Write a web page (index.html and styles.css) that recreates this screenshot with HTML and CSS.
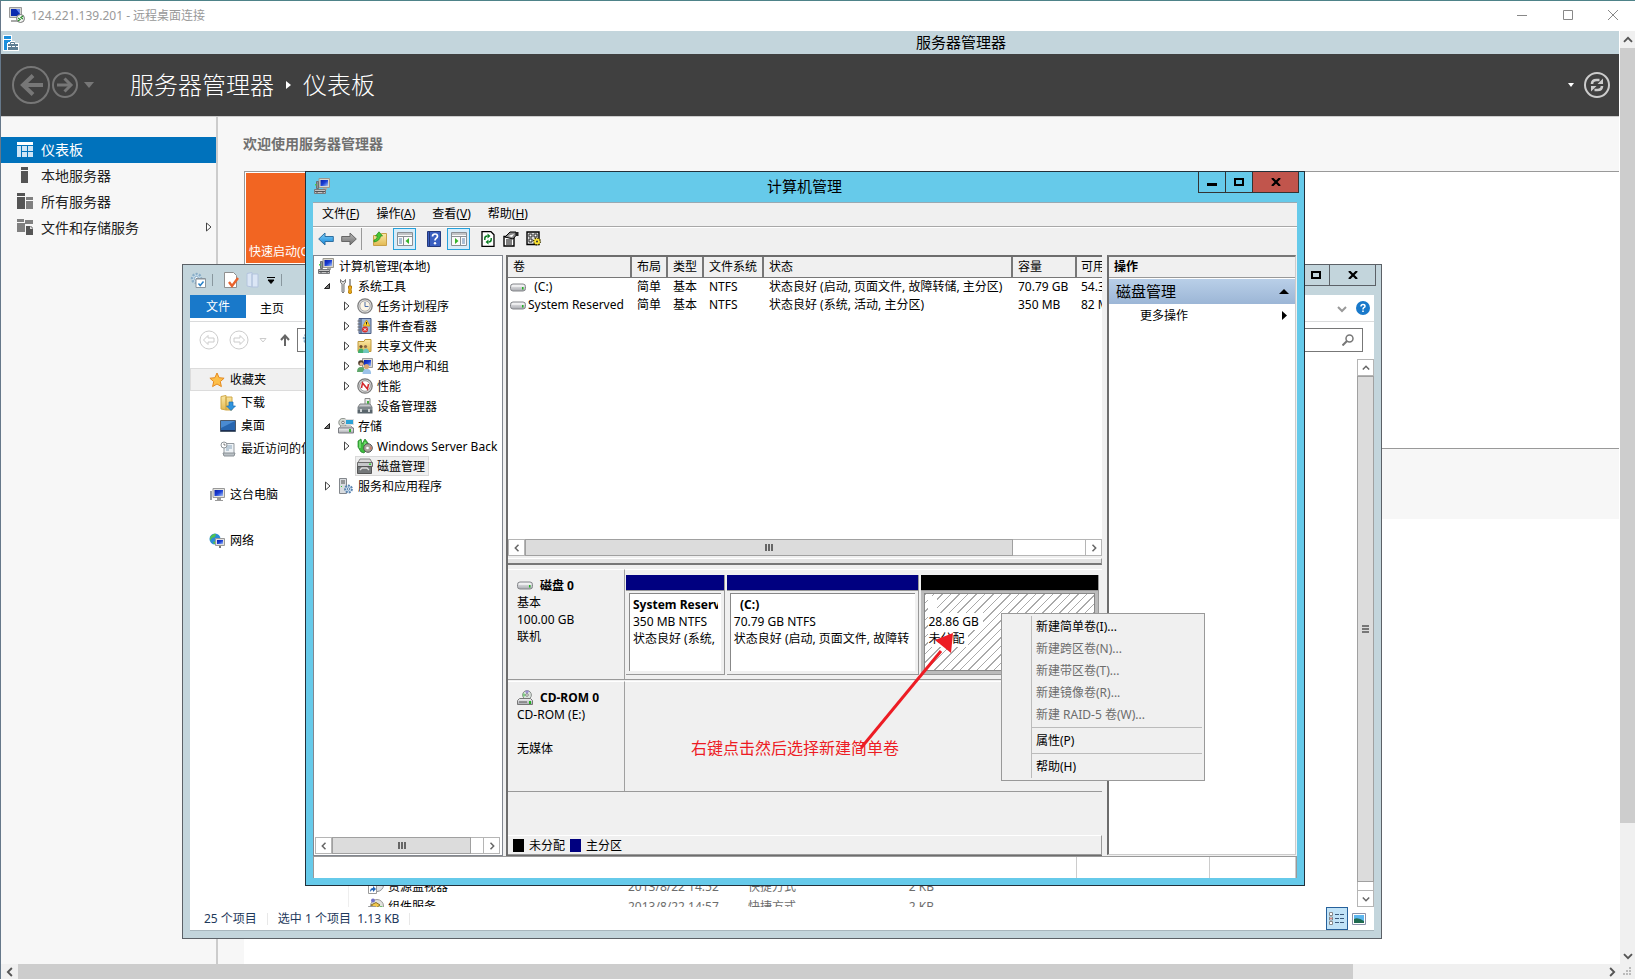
FILE: index.html
```
<!DOCTYPE html>
<html lang="zh-CN">
<head>
<meta charset="utf-8">
<title>124.221.139.201 - 远程桌面连接</title>
<link rel="stylesheet" href="styles.css">
</head>
<body>
<svg class="defs" aria-hidden="true">
  <defs>
    <linearGradient id="g-screen" x1="0" y1="0" x2="1" y2="1"><stop offset="0" stop-color="#0a1ea8"/><stop offset="0.5" stop-color="#1b3fd6"/><stop offset="1" stop-color="#a9c4f5"/></linearGradient>
    <linearGradient id="g-drive" x1="0" y1="0" x2="0" y2="1"><stop offset="0" stop-color="#f2f2f4"/><stop offset="1" stop-color="#a9abb0"/></linearGradient>
    <linearGradient id="g-blue" x1="0" y1="0" x2="0" y2="1"><stop offset="0" stop-color="#7fd0fa"/><stop offset="1" stop-color="#1485d6"/></linearGradient>
    <linearGradient id="g-gray" x1="0" y1="0" x2="0" y2="1"><stop offset="0" stop-color="#b8b8b8"/><stop offset="1" stop-color="#6f6f6f"/></linearGradient>
    <linearGradient id="g-folder" x1="0" y1="0" x2="0" y2="1"><stop offset="0" stop-color="#fbe9a8"/><stop offset="1" stop-color="#e2b951"/></linearGradient>
  </defs>
  <symbol id="i-pc" viewBox="0 0 16 16"><path d="M5 .5h10.500v9H5z" fill="#d9d6cd" stroke="#9a988f"/><path d="M6.500 2h7.500v6H6.500z" fill="url(#g-screen)"/><path d="M2.500 3.500h2v7h-2z" fill="#8f9296" stroke="#6c6f73"/><path d="M1 6h1.500v1.500H1z" fill="#4ad24a"/><path d="M9 10h4v2H9z" fill="#aaa"/><path d="M.5 11.500h11v4H.5z" fill="#c4c4c4" stroke="#77797c"/><path d="M1 13.500h10M3 13v2M9 13v2" stroke="#505356"/></symbol>
  <symbol id="i-rdp" viewBox="0 0 16 16"><path d="M0.500 0.500h12v10h-12z" fill="#d4d4d0" stroke="#999"/><path d="M2 2h9v7H2z" fill="#0c2bb0"/><path d="M7 2h4v5z" fill="#6b8cf0"/><path d="M2 13h7v2H2z" fill="#a8a8a8"/><circle cx="11.500" cy="11.500" r="4" fill="#f4f4f4" stroke="#777"/><path d="M9 11l2 1.500-2 1.500M14 9l-2 1.500 2 1.500" fill="none" stroke="#2a8f2a" stroke-width="1.300"/></symbol>
  <symbol id="i-svrmgr" viewBox="0 0 16 16"><path d="M0 0h9v16H0z" fill="#fff"/><path d="M1 1h7v3H1zM1 5h7v2H5v8H1z" fill="#1c8fdc"/><path d="M4 8h3V6h5v2h4v8H4z" fill="#fff"/><path d="M5 9h10v2H5zM5 12h10v3H5z" fill="#5d7e93"/><path d="M7.500 9V7.500h4V9" fill="none" stroke="#5d7e93"/><path d="M8 11h1v2H8zM12 11h1v2h-1z" fill="#5d7e93"/></symbol>
  <symbol id="i-tools" viewBox="0 0 16 16"><path d="M2.500 1.500v3l1.500 1.500v8q1 2 2 0V6l1.500-1.500v-3L6 3.500H4z" fill="#d4d4d4" stroke="#777"/><path d="M12 1v7" stroke="#888" stroke-width="1.600"/><path d="M10.500 8h3v2l-.5 1 .5 4q-1.500 1-3 0l.5-4-.5-1z" fill="#f4b219" stroke="#b57b08"/></symbol>
  <symbol id="i-clock" viewBox="0 0 16 16"><circle cx="8" cy="8" r="7.200" fill="#d9d9d9" stroke="#7c7c7c" stroke-width="1.200"/><circle cx="8" cy="8" r="5.200" fill="#fcf6e6" stroke="#aaa"/><path d="M8 4v4.500h3.500" fill="none" stroke="#4c6ea8"/></symbol>
  <symbol id="i-event" viewBox="0 0 16 16"><path d="M2 .5h12v15H2z" fill="#9db4d4" stroke="#4c5f86"/><path d="M4 .5v15" stroke="#36486e"/><path d="M0.500 3h3M0.500 6h3M0.500 9h3M0.500 12h3" stroke="#666"/><path d="M9.500 2l3.500 6H6z" fill="#ffd633" stroke="#c98e00" stroke-width=".7"/><path d="M9.500 4v2.500" stroke="#222"/><circle cx="8" cy="11.500" r="3" fill="#d9302c"/><path d="M6.800 10.300l2.400 2.400M9.200 10.300l-2.400 2.400" stroke="#fff"/></symbol>
  <symbol id="i-share" viewBox="0 0 16 16"><path d="M1 3.500h6l1-2h6v12H1z" fill="url(#g-folder)" stroke="#c09a3c"/><circle cx="4" cy="8.500" r="1.600" fill="#6b4a2e"/><path d="M1 15q0-4.500 3-4.500t3 4.500z" fill="#3fae6f"/><circle cx="8.500" cy="8.500" r="1.600" fill="#8c6a48"/><path d="M6 15q0-4.500 3-4.500t3 4.500z" fill="#6fc8bf"/></symbol>
  <symbol id="i-users" viewBox="0 0 16 16"><path d="M5.500.5h10v9h-10z" fill="#dcd9d0" stroke="#999"/><path d="M7 2h7v6H7z" fill="url(#g-screen)"/><circle cx="4" cy="5" r="2.800" fill="#4c382a"/><circle cx="4.300" cy="6" r="1.800" fill="#e8b98e"/><path d="M0 14q0-5 4-5t4 5z" fill="#5ea66a"/><circle cx="9.500" cy="8.500" r="2.600" fill="#d9a877"/><path d="M5.500 16q0-5 4.500-5t4 5z" fill="#9cc2e8"/></symbol>
  <symbol id="i-perf" viewBox="0 0 16 16"><circle cx="8" cy="8" r="7.200" fill="#d6d6d6" stroke="#777" stroke-width="1.200"/><circle cx="8" cy="8" r="5.300" fill="#fff" stroke="#999"/><path d="M4.500 10l1-5 5 6 1-5" fill="none" stroke="#d3262a" stroke-width="1.500"/></symbol>
  <symbol id="i-device" viewBox="0 0 16 16"><path d="M8 .5h5v8H8z" fill="#ececec" stroke="#888"/><path d="M10 3h2v3h-2z" fill="#45b040"/><path d="M1 9l2-3h10l2 3z" fill="#c5c8cb" stroke="#808386"/><path d="M.5 9h15v3H.5z" fill="#7f878c"/><path d="M.5 12h15v3.500H.5z" fill="#59656c"/><path d="M3 11h2v3H3zM11 11h2v3h-2z" fill="#cfd4d6"/></symbol>
  <symbol id="i-storage" viewBox="0 0 16 16"><circle cx="5" cy="4.500" r="4.200" fill="#d5dad3" stroke="#8a8f8a"/><circle cx="5" cy="4.500" r="1.300" fill="#fff" stroke="#777"/><path d="M7.500 1.500h8v5h-8z" fill="#2ba2d6" stroke="#ddd"/><path d="M1 10l2-2h10l2 2z" fill="#f0f0f0" stroke="#999"/><path d="M.5 10h15v5H.5z" fill="url(#g-drive)" stroke="#7d7f84"/><path d="M11 11h2v3h-2z" fill="#32b432"/></symbol>
  <symbol id="i-backup" viewBox="0 0 16 16"><path d="M1 3l3-2 1 5 3-5 3 4v5l-4 5-3-1-3-5z" fill="#3dbb3d" stroke="#1d7d24" stroke-width=".7"/><path d="M3 3v7M8 4v6" stroke="#a6f5a0"/><circle cx="11" cy="10" r="4.300" fill="#a8a49c" stroke="#555"/><circle cx="10.500" cy="10" r="1.300" fill="#fff"/><path d="M13 8l2 2-2 2z" fill="#d27a64"/></symbol>
  <symbol id="i-disk" viewBox="0 0 16 16"><path d="M1 4.500l2-3.500h10l2 3.500z" fill="#dadada" stroke="#888"/><path d="M.5 4.500h15v4H.5z" fill="#c5c7c9" stroke="#6b6b6b"/><path d="M12 5.500h2V7h-2z" fill="#35d035"/><path d="M.5 8.500h14v7H.5z" fill="#74787a" stroke="#555"/><path d="M3 12l2-2h5l2 2" fill="none" stroke="#ddd" stroke-width="1.300"/></symbol>
  <symbol id="i-services" viewBox="0 0 16 16"><path d="M1.500.5h7v15h-7z" fill="#d9dcdf" stroke="#83878c"/><path d="M3 3h4M3 5h4" stroke="#555"/><path d="M3 8h1v1H3z" fill="#3c3"/><circle cx="10.500" cy="11" r="3.400" fill="#d6e6f5" stroke="#5c85b0" stroke-width="2" stroke-dasharray="2 1"/><circle cx="10.500" cy="11" r="1.200" fill="#fff" stroke="#5c85b0"/></symbol>
  <symbol id="i-drive" viewBox="0 0 16 8"><path d="M.5 3q0-2.500 2.500-2.500h10q2.500 0 2.500 2.500v2q0 2.500-2.500 2.500H3q-2.500 0-2.500-2.500z" fill="url(#g-drive)" stroke="#85878b"/><path d="M2 2.500h12" stroke="#fff"/><path d="M12 3.500h1.500V6H12z" fill="#24b324"/></symbol>
  <symbol id="i-cdrom" viewBox="0 0 16 16"><circle cx="10" cy="5" r="4.400" fill="#d9e3dc" stroke="#8b8f8c"/><path d="M10 5L8 1q3-1 4 0z" fill="#9c8fd0"/><path d="M10 5l-4 2q-.5-3 0-4z" fill="#7fce83"/><circle cx="10" cy="5" r="1.300" fill="#fff" stroke="#888"/><path d="M.5 10.500l2-2h11l2 2v4h-15z" fill="url(#g-drive)" stroke="#777"/><path d="M2 12h8" stroke="#555"/><path d="M12 11h2v3h-2z" fill="#24b324"/></symbol>
  <symbol id="i-left" viewBox="0 0 16 16"><path d="M.7 8L7 2v3.500h8.300v5H7V14z" fill="url(#g-blue)" stroke="#2f6fa0"/></symbol>
  <symbol id="i-right" viewBox="0 0 16 16"><path d="M15.300 8L9 2v3.500H.7v5H9V14z" fill="url(#g-gray)" stroke="#666"/></symbol>
  <symbol id="i-upfolder" viewBox="0 0 16 16"><path d="M1.500 4.500h7l1-2h5v12h-13z" fill="url(#g-folder)" stroke="#c8a048"/><path d="M2 9q3 0 3.500-4H3.500L7 .8 10.500 5H8.500q-.5 5-6.500 6z" fill="#47c733" stroke="#218a1b" stroke-width=".7"/></symbol>
  <symbol id="i-panel-l" viewBox="0 0 16 14"><path d="M.5.5h15v13H.5z" fill="#fafafa" stroke="#8a8f94"/><path d="M1 2h14M1 4.500h14" stroke="#8a8f94"/><path d="M6.500 5v8" stroke="#8a8f94"/><path d="M2 7h3M2 9h3M2 11h3" stroke="#5d83ad"/><path d="M12 6v6L8.500 9z" fill="#35b32b"/></symbol>
  <symbol id="i-panel-r" viewBox="0 0 16 14"><path d="M.5.5h15v13H.5z" fill="#fafafa" stroke="#8a8f94"/><path d="M1 2h14M1 4.500h14" stroke="#8a8f94"/><path d="M9.500 5v8" stroke="#8a8f94"/><path d="M11 7h3M11 9h3M11 11h3" stroke="#5d83ad"/><path d="M4 6v6L7.500 9z" fill="#35b32b"/></symbol>
  <symbol id="i-help" viewBox="0 0 14 16"><path d="M.5.5h13v15H.5z" fill="#3a5fc0" stroke="#24397c"/><path d="M2.500 1v14" stroke="#22367a"/><path d="M5.500 5.500q0-2.500 2.500-2.500t2.500 2.300q0 1.200-1.500 2.200-1 .7-1 2" fill="none" stroke="#fff" stroke-width="1.700"/><circle cx="8" cy="12.300" r="1.200" fill="#fff"/></symbol>
  <symbol id="i-refreshdoc" viewBox="0 0 14 16"><path d="M1 .7h9l3 3v11.600H1z" fill="#fff" stroke="#000" stroke-width="1.300"/><path d="M3.800 9V7.500Q3.800 5 6.500 5M10.200 7v1.500q0 2.500-2.700 2.500" fill="none" stroke="#0a7f22" stroke-width="1.500"/><path d="M6.500 2.500L9.500 5l-3 2.500zM7.500 8.500l-3 2.500 3 2.500z" fill="#0a7f22"/></symbol>
  <symbol id="i-props" viewBox="0 0 16 16"><path d="M1 5.500h10v9.500H1z" fill="#fff" stroke="#000" stroke-width="1.400"/><path d="M3 9h6M3 11h6M3 13h6" stroke="#000"/><path d="M2 6l5-5h6v3.500L10 8z" fill="#888" stroke="#000"/><path d="M5 5l4 1 2-3z" fill="#fff"/><path d="M13 1h2.500v4H13z" fill="#222"/></symbol>
  <symbol id="i-settings" viewBox="0 0 16 16"><path d="M1 1h12v12.500H1z" fill="#ddd" stroke="#000" stroke-width="1.400"/><path d="M3 3h3v3H3zM8 3h3v3H8zM3 8h3v3H3z" fill="#fff" stroke="#222"/><circle cx="11" cy="10.500" r="3.200" fill="#ffe633" stroke="#3d3600" stroke-width="1.800" stroke-dasharray="1.200 1.300"/><circle cx="11" cy="10.500" r="2.600" fill="#ffe633"/><circle cx="11" cy="10.500" r="1" fill="#333"/></symbol>
  <symbol id="i-star" viewBox="0 0 16 16"><path d="M8 1l2.100 4.700 5 .5-3.800 3.400 1.100 5L8 12l-4.400 2.600 1.100-5L.9 6.200l5-.5z" fill="#fcbf4a" stroke="#e58a1f"/></symbol>
  <symbol id="i-download" viewBox="0 0 16 16"><path d="M1 1.500l5-1V15l-5-1zM6 2h6v13H6z" fill="url(#g-folder)" stroke="#d0a847"/><path d="M9 7h4v4h2.500L11 15.500 6.500 11H9z" fill="#2f93dd" stroke="#1b6fb3" stroke-width=".7"/></symbol>
  <symbol id="i-desktop" viewBox="0 0 16 16"><path d="M.5 2.500h15v11H.5z" fill="#2766b0" stroke="#4b5a6c"/><path d="M1 3h14L1 10z" fill="#4a8bd2"/><path d="M1 12h14v1H1z" fill="#1a2f55"/></symbol>
  <symbol id="i-recent" viewBox="0 0 16 16"><path d="M4 2.500h10v10H4z" fill="#eef2f5" stroke="#949ba1"/><path d="M6 5h6M6 7h6M6 9h3" stroke="#8aa5bb"/><circle cx="4" cy="4" r="3" fill="#fff" stroke="#8e9499"/><path d="M4 2.500V4h1.500" fill="none" stroke="#555" stroke-width=".8"/><path d="M3 12h12l-1 3H4z" fill="#b9c0c5" stroke="#8a9196"/></symbol>
  <symbol id="i-thispc" viewBox="0 0 16 16"><path d="M4 1.500h11.500v9H4z" fill="#e4e4e0" stroke="#999"/><path d="M5.500 3h8.500v6H5.500z" fill="url(#g-screen)"/><path d="M1 4h2v9H1z" fill="#989da2"/><path d="M8 11h4v2H8zM6 13h8v1H6z" fill="#9a9a9a"/></symbol>
  <symbol id="i-network" viewBox="0 0 16 16"><circle cx="6" cy="6" r="5.500" fill="#2b8bd8"/><path d="M2 3q3-3 5-2l-1 3-3 1-2 3q-1-3 1-5zM4 9l3-1 1 3H5z" fill="#51c24f"/><path d="M6.500 5.500h9v7h-9z" fill="#e0e0e0" stroke="#999"/><path d="M8 7h6v4H8z" fill="url(#g-screen)"/><path d="M10 13h2v2h-2z" fill="#777"/></symbol>
  <symbol id="i-gearbox" viewBox="0 0 16 16"><circle cx="6.500" cy="6.500" r="4.500" fill="#c7dcea" stroke="#8aaec8" stroke-width="2.400" stroke-dasharray="2 1.300"/><circle cx="6.500" cy="6.500" r="2" fill="#fff" stroke="#8aaec8"/><path d="M6 6.500h9.500v9H6z" fill="#fff" stroke="#8a949c"/><path d="M6 7h9" stroke="#8a949c"/><path d="M8.500 11.500l1.700 2 3.300-4" fill="none" stroke="#2a82c9" stroke-width="1.500"/></symbol>
  <symbol id="i-doccheck" viewBox="0 0 16 16"><path d="M1.500.5h9l3 3v12h-12z" fill="#fff" stroke="#8f8f8f"/><path d="M6 10l3 4 6-8" fill="none" stroke="#e9622c" stroke-width="2.400"/></symbol>
  <symbol id="i-newfolder" viewBox="0 0 16 16"><path d="M2 1.500l5-1V15l-5-1zM7 2h6v13H7z" fill="#dbe6f5" stroke="#b3c4dd"/></symbol>
  <symbol id="i-shortcut" viewBox="0 0 16 16"><circle cx="9" cy="7" r="6.500" fill="#dfe3e6" stroke="#8b8f93"/><path d="M9 7V2M9 7l4-2" stroke="#c44"/><path d="M.5 7.500h8v8h-8z" fill="#fff" stroke="#999"/><path d="M2 14q0-4 3-4V8l3 3-3 3v-2q-2 0-3 2z" fill="#2063b8"/></symbol>
  <symbol id="i-comps" viewBox="0 0 16 16"><circle cx="9" cy="8" r="6.500" fill="#e2e2de" stroke="#9a9a98"/><circle cx="5" cy="2.500" r="2" fill="#6f6fc8"/><path d="M3 7l5-2.500L12 7l-4 3z" fill="#f1c84c" stroke="#8c702a"/><circle cx="13" cy="10" r="2" fill="#5ab85a"/><path d="M.5 8.500h7v7h-7z" fill="#3870b8" stroke="#999"/></symbol>
  <symbol id="i-dash" viewBox="0 0 16 16"><path d="M0 1h16v3H0z" fill="#fff"/><path d="M0 5h4v11H0zM5 5h5v5H5zM11 5h5v5h-5zM5 11h5v5H5zM11 11h5v5h-5z" fill="#cfe5f6"/></symbol>
  <symbol id="i-server" viewBox="0 0 16 16"><path d="M4 0h7v3H4zM4 4h7v12H4z" fill="#555"/></symbol>
  <symbol id="i-servers" viewBox="0 0 16 16"><path d="M0 0h8v3H0zM0 4h8v12H0z" fill="#555"/><path d="M9 4h7v3H9zM9 8h7v8H9z" fill="#808080"/></symbol>
  <symbol id="i-filesrv" viewBox="0 0 16 16"><path d="M0 0h7v3H0zM0 4h8v9H0zM8 1h8v4H8z" fill="#808080"/><path d="M9 7h5l2 2v7H9z" fill="#555"/><path d="M13 7v3h3z" fill="#ddd"/></symbol>
  <symbol id="c-left" viewBox="0 0 8 8"><path d="M5.500.8L2.300 4l3.200 3.200" fill="none" stroke="currentColor" stroke-width="1.500"/></symbol>
  <symbol id="c-right" viewBox="0 0 8 8"><path d="M2.500.8L5.700 4 2.500 7.200" fill="none" stroke="currentColor" stroke-width="1.500"/></symbol>
  <symbol id="c-up" viewBox="0 0 8 8"><path d="M.8 5.500L4 2.300l3.200 3.200" fill="none" stroke="currentColor" stroke-width="1.500"/></symbol>
  <symbol id="c-down" viewBox="0 0 8 8"><path d="M.8 2.500L4 5.700l3.200-3.200" fill="none" stroke="currentColor" stroke-width="1.500"/></symbol>
  <symbol id="t-closed" viewBox="0 0 8 10"><path d="M2.500 1L7 5 2.500 9z" fill="#fff" stroke="#444"/></symbol>
  <symbol id="t-open" viewBox="0 0 8 10"><path d="M6.500 2.500v5H1.500z" fill="#777" stroke="#222"/></symbol>
</svg>

<header class="rdp-bar">
  <svg class="ico"><use href="#i-rdp"/></svg>
  <h1 class="rdp-title">124.221.139.201 - 远程桌面连接</h1>
  <button class="rdp-btn" aria-label="最小化"><svg width="10" height="10"><path d="M0 5.500h10" stroke="#888"/></svg></button>
  <button class="rdp-btn" aria-label="最大化"><svg width="10" height="10"><path d="M.5.5h9v9h-9z" fill="none" stroke="#888"/></svg></button>
  <button class="rdp-btn" aria-label="关闭"><svg width="10" height="10"><path d="M0 0l10 10M10 0L0 10" stroke="#888"/></svg></button>
</header>

<div class="viewport">
  <div class="remote">
    <div class="sm-title">
      <svg class="ico sm-logo"><use href="#i-svrmgr"/></svg>
      <div class="sm-caption">服务器管理器</div>
    </div>
    <div class="sm-nav">
      <button class="plain" aria-label="后退"><svg width="38" height="38" fill="none" stroke="#777"><circle cx="19" cy="19" r="18" stroke-width="2"/><path d="M31 19H11" stroke-width="4"/><path d="M21 9.500L11 19l10 9.500" stroke-width="4"/></svg></button>
      <button class="plain" aria-label="前进"><svg width="28" height="28" fill="none" stroke="#777"><circle cx="14" cy="14" r="12" stroke-width="2"/><path d="M6 14h14" stroke-width="3"/><path d="M13.500 7.500L20 14l-6.500 6.500" stroke-width="3"/></svg></button>
      <svg class="sm-drop" width="10" height="6"><path d="M0 0h10L5 6z" fill="#777"/></svg>
      <div class="crumbs"><span>服务器管理器</span><svg width="5" height="8"><path d="M0 0l5 4-5 4z" fill="#fff"/></svg><span>仪表板</span></div>
      <svg width="6" height="4"><path d="M0 0h6L3 4z" fill="#fff"/></svg>
      <button class="plain sm-refresh" aria-label="刷新"><svg width="26" height="26" fill="none" stroke="#ccc"><circle cx="13" cy="13" r="12" stroke-width="2"/><path d="M8 12q0-4 4.500-4h3M18 14q0 4-4.500 4h-3" stroke-width="2.600"/><path d="M13.500 12H19V6.500zM12.500 14H7v5.500z" fill="#ccc" stroke="none"/></svg></button>
    </div>
    <div class="sm-body">
      <nav class="sm-side">
        <a href="#" class="side-item active"><svg class="ico"><use href="#i-dash"/></svg>仪表板</a>
        <a href="#" class="side-item"><svg class="ico"><use href="#i-server"/></svg>本地服务器</a>
        <a href="#" class="side-item"><svg class="ico"><use href="#i-servers"/></svg>所有服务器</a>
        <a href="#" class="side-item"><svg class="ico"><use href="#i-filesrv"/></svg>文件和存储服务<svg class="side-more" width="8" height="10"><use href="#t-closed"/></svg></a>
      </nav>
      <main class="sm-main">
        <h2 class="sm-welcome">欢迎使用服务器管理器</h2>
        <div class="welcome-box"><div class="tile">快速启动(Q)</div></div>
        <div class="sm-gap"></div>
        <div class="sm-blank"></div>
      </main>
    </div>
  </div>
  <div class="vscroll" aria-hidden="true"><span class="sb"><svg width="10" height="10"><use href="#c-up"/></svg></span><span class="vthumb"></span><span class="vrest"></span><span class="sb"><svg width="10" height="10"><use href="#c-down"/></svg></span></div>
</div>
<div class="hscroll" aria-hidden="true"><span class="sb"><svg width="10" height="10"><use href="#c-left"/></svg></span><span class="hthumb"></span><span class="hrest"></span><span class="sb"><svg width="10" height="10"><use href="#c-right"/></svg></span><span class="grip"><svg width="9" height="9" fill="#bbb"><path d="M6 0h2v2H6zM3 3h2v2H3zM6 3h2v2H6zM0 6h2v2H0zM3 6h2v2H3zM6 6h2v2H6z"/></svg></span></div>

<section class="explorer" aria-label="文件资源管理器">
  <div class="ex-title">
    <svg class="ico"><use href="#i-gearbox"/></svg><i class="bar"></i>
    <svg class="ico"><use href="#i-doccheck"/></svg><svg class="ico"><use href="#i-newfolder"/></svg>
    <svg width="8" height="7"><path d="M0 .5h8M1 3h6L4 6.500z" stroke="#000"/></svg><i class="bar"></i>
    <div class="winbtns ex-btns">
      <button class="wb" aria-label="最小化"></button>
      <button class="wb" aria-label="最大化"><svg width="10" height="8"><path d="M1 1h8v6H1z" fill="none" stroke="#000" stroke-width="2"/></svg></button>
      <button class="wb close" aria-label="关闭"><svg width="10" height="8"><path d="M1 0l8 8M9 0L1 8" stroke="#000" stroke-width="2.200"/></svg></button>
    </div>
  </div>
  <div class="ex-inner">
    <div class="ex-tabs"><button class="tab file">文件</button><button class="tab">主页</button>
      <svg class="push" width="10" height="7"><path d="M1 1l4 4 4-4" fill="none" stroke="#999" stroke-width="2"/></svg>
      <svg class="ex-help" width="14" height="14"><circle cx="7" cy="7" r="7" fill="#1979ca"/><path d="M5 5.500q0-2 2-2t2 1.700q0 .8-1.200 1.500Q7 7.200 7 8.500" fill="none" stroke="#fff" stroke-width="1.500"/><path d="M6.200 9.500h1.600V11H6.200z" fill="#fff"/></svg>
    </div>
    <div class="ex-nav">
      <svg width="20" height="20" fill="none" stroke="#ccc"><circle cx="10" cy="10" r="9"/><path d="M9 5.500L4.500 10 9 14.500V12h6V8H9z"/></svg>
      <svg width="20" height="20" fill="none" stroke="#ccc"><circle cx="10" cy="10" r="9"/><path d="M11 5.500l4.500 4.500-4.500 4.500V12H5V8h6z"/></svg>
      <svg width="8" height="5"><path d="M1 .5h6L4 4z" fill="none" stroke="#ccc"/></svg>
      <svg class="ex-up" width="10" height="12"><path d="M5 12V2M1 6l4-4.500L9 6" fill="none" stroke="#666" stroke-width="2"/></svg>
      <div class="ex-addr"><svg class="ico"><use href="#i-gearbox"/></svg></div>
      <div class="ex-search"><input type="search" aria-label="搜索"><svg width="12" height="12"><circle cx="7.500" cy="4.500" r="3.500" fill="none" stroke="#777" stroke-width="1.500"/><path d="M5 7l-4.500 4.500" stroke="#777" stroke-width="2"/></svg></div>
    </div>
    <div class="ex-body">
      <nav class="ex-tree">
        <a href="#" class="fav"><svg class="ico"><use href="#i-star"/></svg>收藏夹</a>
        <a href="#" class="sub"><svg class="ico"><use href="#i-download"/></svg>下载</a>
        <a href="#" class="sub"><svg class="ico"><use href="#i-desktop"/></svg>桌面</a>
        <a href="#" class="sub"><svg class="ico"><use href="#i-recent"/></svg>最近访问的位置</a>
        <a href="#" class="top"><svg class="ico"><use href="#i-thispc"/></svg>这台电脑</a>
        <a href="#" class="top"><svg class="ico"><use href="#i-network"/></svg>网络</a>
      </nav>
      <div class="ex-list">
        <div class="ex-row"><svg class="ico"><use href="#i-shortcut"/></svg><span>资源监视器</span><span>2013/8/22 14:52</span><span>快捷方式</span><span class="num">2 KB</span></div>
        <div class="ex-row"><svg class="ico"><use href="#i-comps"/></svg><span>组件服务</span><span>2013/8/22 14:57</span><span>快捷方式</span><span class="num">2 KB</span></div>
      </div>
      <div class="ex-vs" aria-hidden="true"><span class="cb"><svg width="8" height="8"><use href="#c-up"/></svg></span><span class="cthumb"><svg width="8" height="8"><path d="M0 1h7M0 4h7M0 7h7" stroke="#777" stroke-width="2"/></svg></span><span class="crest"></span><span class="cb"><svg width="8" height="8"><use href="#c-down"/></svg></span></div>
    </div>
    <div class="ex-status"><span>25 个项目</span><i></i><span>选中 1 个项目&nbsp; 1.13 KB</span><i></i>
      <button class="view on" aria-label="详细信息"><svg width="16" height="14"><path d="M.5.5h3v3h-3zM.5 5h3v3h-3zM.5 9.500h3v3h-3z" fill="#fff" stroke="#888"/><path d="M6 2.500h4M11 2.500h4M6 6.500h4M11 6.500h4M6 10.500h4M11 10.500h4" stroke="#3b5a7c"/><path d="M1.500 6h1v1h-1z" fill="#c00"/></svg></button>
      <button class="view" aria-label="大图标"><svg width="14" height="12"><path d="M.5.5h13v11H.5z" fill="#fff" stroke="#8890a8"/><path d="M2 2h10v8H2z" fill="#5cb6ee"/><path d="M2 6q4-2 10 2v2H2z" fill="#1f6b50"/></svg></button>
    </div>
  </div>
</section>

<section class="mmc" aria-label="计算机管理">
  <div class="mmc-title">
    <svg class="ico"><use href="#i-pc"/></svg>
    <h2 class="mmc-caption">计算机管理</h2>
    <div class="winbtns mmc-btns">
      <button class="wb" aria-label="最小化"><svg width="10" height="8"><path d="M0 6.500h10" stroke="#000" stroke-width="3"/></svg></button>
      <button class="wb" aria-label="最大化"><svg width="10" height="8"><path d="M1 1h8v6H1z" fill="none" stroke="#000" stroke-width="2"/></svg></button>
      <button class="wb close red" aria-label="关闭"><svg width="10" height="8"><path d="M1 0l8 8M9 0L1 8" stroke="#000" stroke-width="2.200"/></svg></button>
    </div>
  </div>
  <div class="mmc-inner">
    <div class="mmc-menu"><button>文件(<u>F</u>)</button><button>操作(<u>A</u>)</button><button>查看(<u>V</u>)</button><button>帮助(<u>H</u>)</button></div>
    <div class="mmc-tools">
      <button aria-label="后退"><svg class="ico"><use href="#i-left"/></svg></button>
      <button aria-label="前进"><svg class="ico"><use href="#i-right"/></svg></button><i></i>
      <button aria-label="向上"><svg class="ico"><use href="#i-upfolder"/></svg></button>
      <button class="on" aria-label="控制台树"><svg class="ico"><use href="#i-panel-l"/></svg></button>
      <button class="ml" aria-label="帮助"><svg class="ico"><use href="#i-help"/></svg></button>
      <button class="on" aria-label="操作窗格"><svg class="ico"><use href="#i-panel-r"/></svg></button>
      <button class="ml" aria-label="刷新"><svg class="ico"><use href="#i-refreshdoc"/></svg></button>
      <button aria-label="属性"><svg class="ico"><use href="#i-props"/></svg></button>
      <button aria-label="设置"><svg class="ico"><use href="#i-settings"/></svg></button>
    </div>
    <div class="mmc-panes">
      <div class="tree-pane">
        <ul class="tree">
          <li class="l0"><svg class="ico"><use href="#i-pc"/></svg>计算机管理(本地)</li>
          <li class="l1"><svg class="tw"><use href="#t-open"/></svg><svg class="ico"><use href="#i-tools"/></svg>系统工具</li>
          <li class="l2"><svg class="tw"><use href="#t-closed"/></svg><svg class="ico"><use href="#i-clock"/></svg>任务计划程序</li>
          <li class="l2"><svg class="tw"><use href="#t-closed"/></svg><svg class="ico"><use href="#i-event"/></svg>事件查看器</li>
          <li class="l2"><svg class="tw"><use href="#t-closed"/></svg><svg class="ico"><use href="#i-share"/></svg>共享文件夹</li>
          <li class="l2"><svg class="tw"><use href="#t-closed"/></svg><svg class="ico"><use href="#i-users"/></svg>本地用户和组</li>
          <li class="l2"><svg class="tw"><use href="#t-closed"/></svg><svg class="ico"><use href="#i-perf"/></svg>性能</li>
          <li class="l2"><svg class="tw"></svg><svg class="ico"><use href="#i-device"/></svg>设备管理器</li>
          <li class="l1"><svg class="tw"><use href="#t-open"/></svg><svg class="ico"><use href="#i-storage"/></svg>存储</li>
          <li class="l2"><svg class="tw"><use href="#t-closed"/></svg><svg class="ico"><use href="#i-backup"/></svg>Windows Server Back</li>
          <li class="l2"><svg class="tw"></svg><span class="sel"><svg class="ico"><use href="#i-disk"/></svg>磁盘管理</span></li>
          <li class="l1"><svg class="tw"><use href="#t-closed"/></svg><svg class="ico"><use href="#i-services"/></svg>服务和应用程序</li>
        </ul>
        <div class="chs" aria-hidden="true"><span class="cb"><svg width="8" height="8"><use href="#c-left"/></svg></span><span class="hth tree-thumb"><svg width="8" height="7"><path d="M1 0v7M4 0v7M7 0v7" stroke="#666" stroke-width="2"/></svg></span><span class="hre"></span><span class="cb"><svg width="8" height="8"><use href="#c-right"/></svg></span></div>
      </div>
      <div class="mid-pane">
        <div class="vol-list">
          <table class="vols">
            <colgroup><col class="c1"><col class="c2"><col class="c2"><col class="c4"><col class="c5"><col class="c6"><col></colgroup>
            <thead><tr><th>卷</th><th>布局</th><th>类型</th><th>文件系统</th><th>状态</th><th>容量</th><th>可用</th></tr></thead>
            <tbody>
              <tr><td class="name"><svg class="drv"><use href="#i-drive"/></svg>&nbsp; (C:)</td><td>简单</td><td>基本</td><td>NTFS</td><td>状态良好 (启动, 页面文件, 故障转储, 主分区)</td><td>70.79 GB</td><td>54.3</td></tr>
              <tr><td class="name"><svg class="drv"><use href="#i-drive"/></svg>System Reserved</td><td>简单</td><td>基本</td><td>NTFS</td><td>状态良好 (系统, 活动, 主分区)</td><td>350 MB</td><td>82 M</td></tr>
            </tbody>
          </table>
          <div class="chs" aria-hidden="true"><span class="cb"><svg width="8" height="8"><use href="#c-left"/></svg></span><span class="hth list-thumb"><svg width="8" height="7"><path d="M1 0v7M4 0v7M7 0v7" stroke="#666" stroke-width="2"/></svg></span><span class="hre"></span><span class="cb"><svg width="8" height="8"><use href="#c-right"/></svg></span></div>
        </div>
        <div class="splitter"></div>
        <div class="diagram">
          <div class="disk">
            <div class="disk-label"><b><svg class="drv"><use href="#i-drive"/></svg>磁盘 0</b><p>基本</p><p>100.00 GB</p><p>联机</p></div>
            <div class="parts">
              <div class="part p1"><div class="cap"></div><div class="pbody"><div class="pin"><b>System Reserved</b><p>350 MB NTFS</p><p>状态良好 (系统,</p></div></div></div>
              <div class="part p2"><div class="cap"></div><div class="pbody"><div class="pin"><b>&nbsp; (C:)</b><p>70.79 GB NTFS</p><p>状态良好 (启动, 页面文件, 故障转</p></div></div></div>
              <div class="part p3 free"><div class="cap"></div><div class="pbody"><div class="pin"><b>&nbsp; &nbsp;</b><p><span>28.86 GB</span></p><p><span>未分配</span></p></div></div></div>
            </div>
          </div>
          <div class="disk cd">
            <div class="disk-label"><b><svg class="ico"><use href="#i-cdrom"/></svg>CD-ROM 0</b><p>CD-ROM (E:)</p><p>&nbsp;</p><p>无媒体</p></div>
            <div class="parts"></div>
          </div>
          <div class="legend"><i class="sw black"></i>未分配<i class="sw navy"></i>主分区</div>
        </div>
      </div>
      <aside class="act-pane">
        <h3>操作</h3>
        <div class="act-head">磁盘管理<svg width="10" height="5"><path d="M0 5h10L5 0z"/></svg></div>
        <button class="act-more">更多操作<svg width="5" height="9"><path d="M0 0l5 4.500L0 9z"/></svg></button>
      </aside>
    </div>
    <div class="mmc-status"><span></span><span class="s2"></span><span class="s3"></span></div>
  </div>
</section>

<p class="note">右键点击然后选择新建简单卷</p>
<svg class="arrow" width="100" height="124"><path d="M4 120L84 23" stroke="#ed1c24" stroke-width="3"/><path d="M96 5l-2 20-16-13z" fill="#ed1c24"/></svg>

<div class="ctx" role="menu">
  <button role="menuitem">新建简单卷(I)...</button>
  <button role="menuitem" disabled>新建跨区卷(N)...</button>
  <button role="menuitem" disabled>新建带区卷(T)...</button>
  <button role="menuitem" disabled>新建镜像卷(R)...</button>
  <button role="menuitem" disabled>新建 RAID-5 卷(W)...</button>
  <hr>
  <button role="menuitem">属性(P)</button>
  <hr>
  <button role="menuitem">帮助(H)</button>
</div>
</body>
</html>
```
FILE: styles.css
```
* { box-sizing: border-box; }
html { height: 100%; }
body {
  margin: 0;
  height: 100%;
  display: flex;
  flex-direction: column;
  position: relative;
  overflow: hidden;
  border-left: 1px solid #66788a;
  border-top: 1px solid #4e8389;
  background: #fff;
  color: #000;
  font: 12px/17px "Noto Sans", "Noto Sans CJK SC", sans-serif;
}
h1, h2, h3, p, ul { margin: 0; padding: 0; font-size: inherit; font-weight: normal; }
button { font: inherit; color: inherit; border: 0; padding: 0; margin: 0; background: none; }
a { color: inherit; text-decoration: none; }
svg { display: block; flex: none; }
.defs { position: absolute; width: 0; height: 0; }
.ico { width: 16px; height: 16px; }

/* remote desktop frame */
.rdp-bar { display: flex; align-items: center; height: 30px; padding: 0 0 2px 8px; flex: none; }
.rdp-title { flex: 1; margin-left: 6px; color: #999; }
.rdp-btn { width: 46px; height: 28px; display: grid; place-items: center; }
.rdp-btn:last-child { width: 44px; }
.viewport { flex: 1; display: flex; min-height: 0; }
.remote { flex: 1; min-width: 0; display: flex; flex-direction: column; overflow: hidden; }
.vscroll { width: 16px; border-left: 1px solid #fff; background: #f0f0f0; display: flex; flex-direction: column; color: #555; }
.sb { flex: none; width: 15px; height: 17px; display: grid; place-items: center; }
.vthumb { flex: 776; background: #cdcdcd; }
.vrest { flex: 124; }
.hscroll { height: 15px; flex: none; display: flex; align-items: stretch; background: #f0f0f0; color: #555; }
.hscroll .sb { width: 17px; height: 15px; }
.hthumb { flex: 1335; background: #cdcdcd; }
.hrest { flex: 250; }
.grip { width: 15px; display: grid; place-items: center; }

/* server manager */
.sm-title { width: 1920px; height: 23px; flex: none; display: flex; align-items: center; background: #c3d5dc; padding-left: 2px; }
.sm-caption { flex: 1; text-align: center; font-size: 15px; padding-right: 18px; }
.sm-nav { height: 63px; flex: none; display: flex; align-items: center; background: #404040; border-bottom: 1px solid #ccc; padding: 0 9px 0 11px; }
.sm-nav .plain + .plain { margin-left: 1px; }
.sm-drop { margin-left: 5px; }
.crumbs { flex: 1; margin-left: 36px; display: flex; align-items: center; gap: 12px; color: #fff; font-size: 24px; line-height: 32px; font-weight: 300; }
.sm-refresh { margin-left: 10px; }
.sm-body { flex: 1; display: flex; min-height: 0; }
.sm-side { width: 217px; flex: none; padding-top: 20px; background: #f7f7f7; border-right: 2px solid #ccc; font-size: 14px; }
.side-item { display: flex; align-items: center; height: 26px; padding: 0 4px 2px 16px; gap: 8px; color: #222; }
.side-item.active { background: #0072bc; color: #fff; }
.side-more { margin-left: auto; }
.sm-main { flex: 1; min-width: 0; display: flex; flex-direction: column; background: #f7f7f7; padding-left: 26px; }
.sm-welcome { font-size: 14px; line-height: 20px; padding: 17px 0; color: #707070; font-weight: 700; height: 54px; margin-left: -1px; }
.welcome-box { height: 278px; flex: none; border: 1px solid #999; border-right: 0; background: #fff; padding: 1px; }
.tile { width: 200px; height: 90px; background: #f26522; color: #fff; display: flex; align-items: flex-end; padding: 3px; }
.sm-gap { height: 70px; flex: none; }
.sm-blank { flex: 1; background: #fff; }

/* shared window chrome */
.winbtns { display: flex; }
.wb { display: grid; place-items: center; width: 28px; border: 1px solid #333; border-top: 0; margin-left: -1px; }
.wb.close { width: 47px; }
.cb { width: 17px; height: 17px; flex: none; display: grid; place-items: center; border: 1px solid #b5b5b5; background: #fff; color: #666; }
.chs { display: flex; height: 17px; flex: none; }
.hth { display: grid; place-items: center; background: #dcdcdc; border: 1px solid #a0a0a0; }
.hre { flex: 1; border: solid #b5b5b5; border-width: 1px 0; background: #fff; }

/* explorer window */
.explorer { position: absolute; left: 181px; right: 253px; top: 263px; bottom: 40px; display: flex; flex-direction: column; background: #c3d5dc; border: 1px solid #5c6167; padding: 0 7px 7px; }
.ex-title { height: 30px; flex: none; display: flex; align-items: center; gap: 6px; }
.bar { width: 1px; height: 12px; background: #89979e; }
.ex-title .bar { margin-right: 4px; }
.ex-btns { margin-left: auto; align-self: flex-start; height: 21px; margin-right: -2px; }
.ex-btns .wb { border-color: #5c6167; }
.ex-inner { flex: 1; min-height: 0; display: flex; flex-direction: column; background: #fff; border-bottom: 1px solid #a8b6bd; }
.ex-tabs { height: 27px; flex: none; display: flex; align-items: flex-start; border-bottom: 1px solid #dadbdc; padding-right: 4px; }
.tab { height: 26px; width: 52px; }
.tab.file { height: 23px; width: 56px; background: #1979ca; color: #fff; }
.push { margin: 11px 9px 0 auto; }
.ex-help { margin-top: 6px; }
.ex-nav { height: 36px; flex: none; display: flex; align-items: center; padding: 0 11px 0 9px; }
.ex-nav svg + svg { margin-left: 10px; }
.ex-nav .ex-up { margin: 0 7px 0 13px; }
.ex-addr { flex: 1; height: 24px; border: 1px solid #777; display: flex; align-items: center; padding-left: 4px; }
.ex-search { width: 240px; height: 24px; border: 1px solid #777; margin-left: 10px; display: flex; align-items: center; padding-right: 8px; }
.ex-search input { flex: 1; min-width: 0; border: 0; outline: 0; height: 20px; background: none; }
.ex-body { flex: 1; min-height: 0; display: flex; }
.ex-tree { width: 159px; flex: none; padding-top: 10px; overflow: hidden; display: flex; flex-direction: column; white-space: nowrap; border-right: 1px solid #eee; }
.ex-tree a { display: flex; align-items: center; gap: 5px; height: 23px; flex: none; padding-left: 19px; }
.ex-tree .fav { background: #f0f0f0; border: 1px solid #dcdcdc; padding-left: 18px; }
.ex-tree .sub { padding-left: 30px; }
.ex-tree .top { margin-top: 23px; }
.ex-list { flex: 1; min-width: 0; display: flex; flex-direction: column; justify-content: flex-end; overflow: hidden; padding-left: 19px; color: #6d6d6d; height: calc(100% + 9px); }
.ex-row { flex: none; height: 20px; display: grid; grid-template-columns: 16px 236px 116px 90px 92px; column-gap: 4px; align-items: center; }
.ex-row span:nth-of-type(1) { color: #000; }
.num { text-align: right; }
.ex-vs { width: 17px; display: flex; flex-direction: column; margin-top: 1px; }
.cthumb { flex: 507; display: grid; place-items: center; background: #dcdcdc; border: 1px solid #a0a0a0; }
.crest { flex: 8; border: solid #b5b5b5; border-width: 0 1px; }
.ex-status { position: relative; background: #fff; height: 23px; flex: none; display: flex; align-items: center; padding: 0 4px 0 14px; color: #1e395b; }
.ex-status i { width: 1px; height: 12px; background: #e8e8e8; margin: 0 10px; }
.view { width: 22px; height: 23px; display: grid; place-items: center; }
.view.on { margin-left: auto; background: #c1e3f7; border: 1px solid #26619c; }

/* computer management window */
.mmc { position: absolute; left: 304px; right: 330px; top: 170px; bottom: 93px; display: flex; flex-direction: column; background: #66caea; border: 1px solid #22303a; padding: 0 7px 7px; }
.mmc-title { height: 30px; flex: none; display: grid; grid-template-columns: 1fr auto 1fr; align-items: center; padding: 0 2px 2px 1px; }
.mmc-caption { font-size: 15px; }
.mmc-btns { justify-self: end; align-self: start; height: 21px; margin-right: -4px; }
.red { background: #c1554c; }
.mmc-inner { flex: 1; min-height: 0; display: flex; flex-direction: column; background: #f0f0f0; border-top: 1px solid #9aa9b2; }
.mmc-menu { display: flex; gap: 17px; height: 24px; flex: none; padding: 0 0 2px 9px; align-items: center; border-bottom: 1px solid #a8a8a8; }
.mmc-tools { display: flex; height: 28px; flex: none; align-items: center; padding: 0 0 5px 1px; border-top: 1px solid #fff; }
.mmc-tools button { width: 23px; height: 22px; display: grid; place-items: center; }
.mmc-tools .on { background: #d8ecf8; border: 1px solid #26a0da; margin: 0 2px; }
.mmc-tools i { width: 1px; height: 22px; background: #999; margin: 0 6px 0 1px; }
.mmc-tools .ml { margin-left: 4px; }
.mmc-panes { flex: 1; min-height: 0; display: flex; }
.tree-pane { width: 190px; flex: none; background: #fff; border: 1px solid #828790; padding: 0 2px 1px 1px; display: flex; flex-direction: column; overflow: hidden; }
.tree { flex: 1; list-style: none; white-space: nowrap; overflow: hidden; }
.tree li { display: flex; align-items: center; height: 20px; padding-left: 3px; }
.tree .ico { margin-right: 4px; }
.tree .l0 .ico { margin-right: 5px; }
.tree .l1 { padding-left: 8px; }
.tree .l2 { padding-left: 27px; }
.tw { width: 8px; height: 10px; margin-right: 7px; }
.sel { display: flex; align-items: center; height: 20px; background: #f0f0f0; border: 1px solid #d9d9d9; margin-left: -2px; padding: 0 3px 0 1px; }
.tree-thumb { width: 139px; }
.mid-pane { flex: 1; min-width: 0; margin-left: 3px; border: solid #6d6d6d; border-width: 2px 0 1px 2px; display: flex; flex-direction: column; }
.vol-list { height: 299px; flex: none; background: #fff; overflow: hidden; display: flex; flex-direction: column; justify-content: space-between; }
.vols { width: 100%; table-layout: fixed; border-collapse: separate; border-spacing: 0; white-space: nowrap; }
.c1 { width: 124px; }
.c2 { width: 36px; }
.c4 { width: 60px; }
.c5 { width: 249px; }
.c6 { width: 64px; }
.vols th { height: 21px; padding: 0 0 0 5px; text-align: left; font-weight: normal; background: #f0f0f0; border: solid #777; border-width: 0 2px 1px 0; overflow: hidden; }
.vols th:last-child { border-right: 0; }
.vols th, .vols td { line-height: 16px; }
.vols td { height: 18px; padding: 0 0 0 5px; overflow: hidden; }
.vols th:last-child, .vols td:last-child { padding-left: 4px; }
.vols td.name { padding-left: 2px; overflow: visible; }
.drv { display: inline-block; width: 16px; height: 9px; margin-right: 2px; vertical-align: middle; }
.list-thumb { width: 488px; }
.splitter { height: 7px; flex: none; margin-top: 2px; border: 1px solid #999; border-top-color: #fff; border-bottom: 2px solid #777; background: #e3e3e3; border-left: 0; }
.diagram { flex: 1; min-height: 0; display: flex; flex-direction: column; padding-top: 4px; }
.disk { display: flex; height: 111px; flex: none; border-bottom: 1px solid #999; }
.disk-label { width: 117px; flex: none; padding: 7px 0 0 9px; border: solid #a0a0a0; border-width: 0 1px 0 0; border-top: 1px solid #fff; }
.disk-label b { display: flex; align-items: center; height: 17px; }
.disk-label b .drv, .disk-label b .ico { margin-right: 7px; }
.parts { flex: 1; min-width: 0; display: flex; gap: 3px; padding: 5px 4px 4px 1px; border-top: 1px solid #fff; }
.part { min-width: 0; display: flex; flex-direction: column; border-bottom: 1px solid #999; box-shadow: 1px 0 0 #999; }
.p1 { flex: 98 0 0; }
.p2 { flex: 192 0 0; }
.p3 { flex: 177 0 0; }
.cap { height: 15px; background: #000080; }
.free .cap { background: #000; }
.pbody { flex: 1; border-top: 1px solid #999; padding: 2px 3px 3px; }
.pin { height: 100%; background: #fff; border: solid #888; border-width: 1px 0 0 1px; padding: 2px 3px; overflow: hidden; white-space: nowrap; }
.pin b { display: block; overflow: hidden; }
.free .pbody { background: #bbb; }
.free .pin { background: repeating-linear-gradient(135deg, #aaa 0 1px, #fff 1px 6px); border-width: 1px; }
.free span { background: #fff; padding-right: 4px; display: inline-block; }
.free .pin b { background: #fff; width: 9px; }
.cd { margin-top: 1px; }
.legend { margin-top: auto; height: 20px; flex: none; display: flex; align-items: center; padding-left: 5px; border: 1px solid #999; border-top-color: #fff; border-left: 0; }
.sw { width: 11px; height: 13px; margin-right: 5px; }
.black { background: #000; }
.navy { background: #000080; margin-left: 5px; }
.act-pane { width: 189px; flex: none; margin: 0 1px 1px 5px; border: 1px solid #ccc; border-top: 2px solid #777; border-left: 2px solid #6d6d6d; background: #fff; }
.act-pane h3 { height: 21px; background: #f0f0f0; border-bottom: 1px solid #999; padding-left: 5px; line-height: 20px; font-weight: 700; }
.act-head { display: flex; align-items: center; justify-content: space-between; height: 25px; margin-top: 1px; padding: 0 6px 0 7px; background: linear-gradient(#b9cfe8, #9cb6d6); font-size: 15px; }
.act-more { display: flex; align-items: center; justify-content: space-between; width: 100%; height: 22px; padding: 0 8px 0 31px; }
.mmc-status { height: 22px; flex: none; display: flex; background: #fff; border: 1px solid #999; border-bottom: 0; }
.mmc-status span { flex: 1; border-right: 1px solid #ccc; }
.mmc-status .s2 { flex: 0 0 133px; }
.mmc-status .s3 { flex: 0 0 86px; }

/* overlay */
.note { position: absolute; left: 690px; top: 735px; font-size: 16px; line-height: 24px; color: #ed1c24; white-space: nowrap; }
.arrow { position: absolute; left: 856px; top: 627px; }
.ctx { position: absolute; left: 1000px; top: 612px; width: 204px; padding: 1px 2px 3px; display: flex; flex-direction: column; border: 1px solid #999; background: linear-gradient(#bbb, #bbb) 29px 2px / 1px calc(100% - 4px) no-repeat #f0f0f0; }
.ctx button { height: 22px; text-align: left; padding-left: 32px; }
.ctx button:disabled { color: #6d6d6d; }
.ctx hr { width: 170px; height: 1px; border: 0; background: #bbb; margin: 2px 0 1px 28px; }
```
